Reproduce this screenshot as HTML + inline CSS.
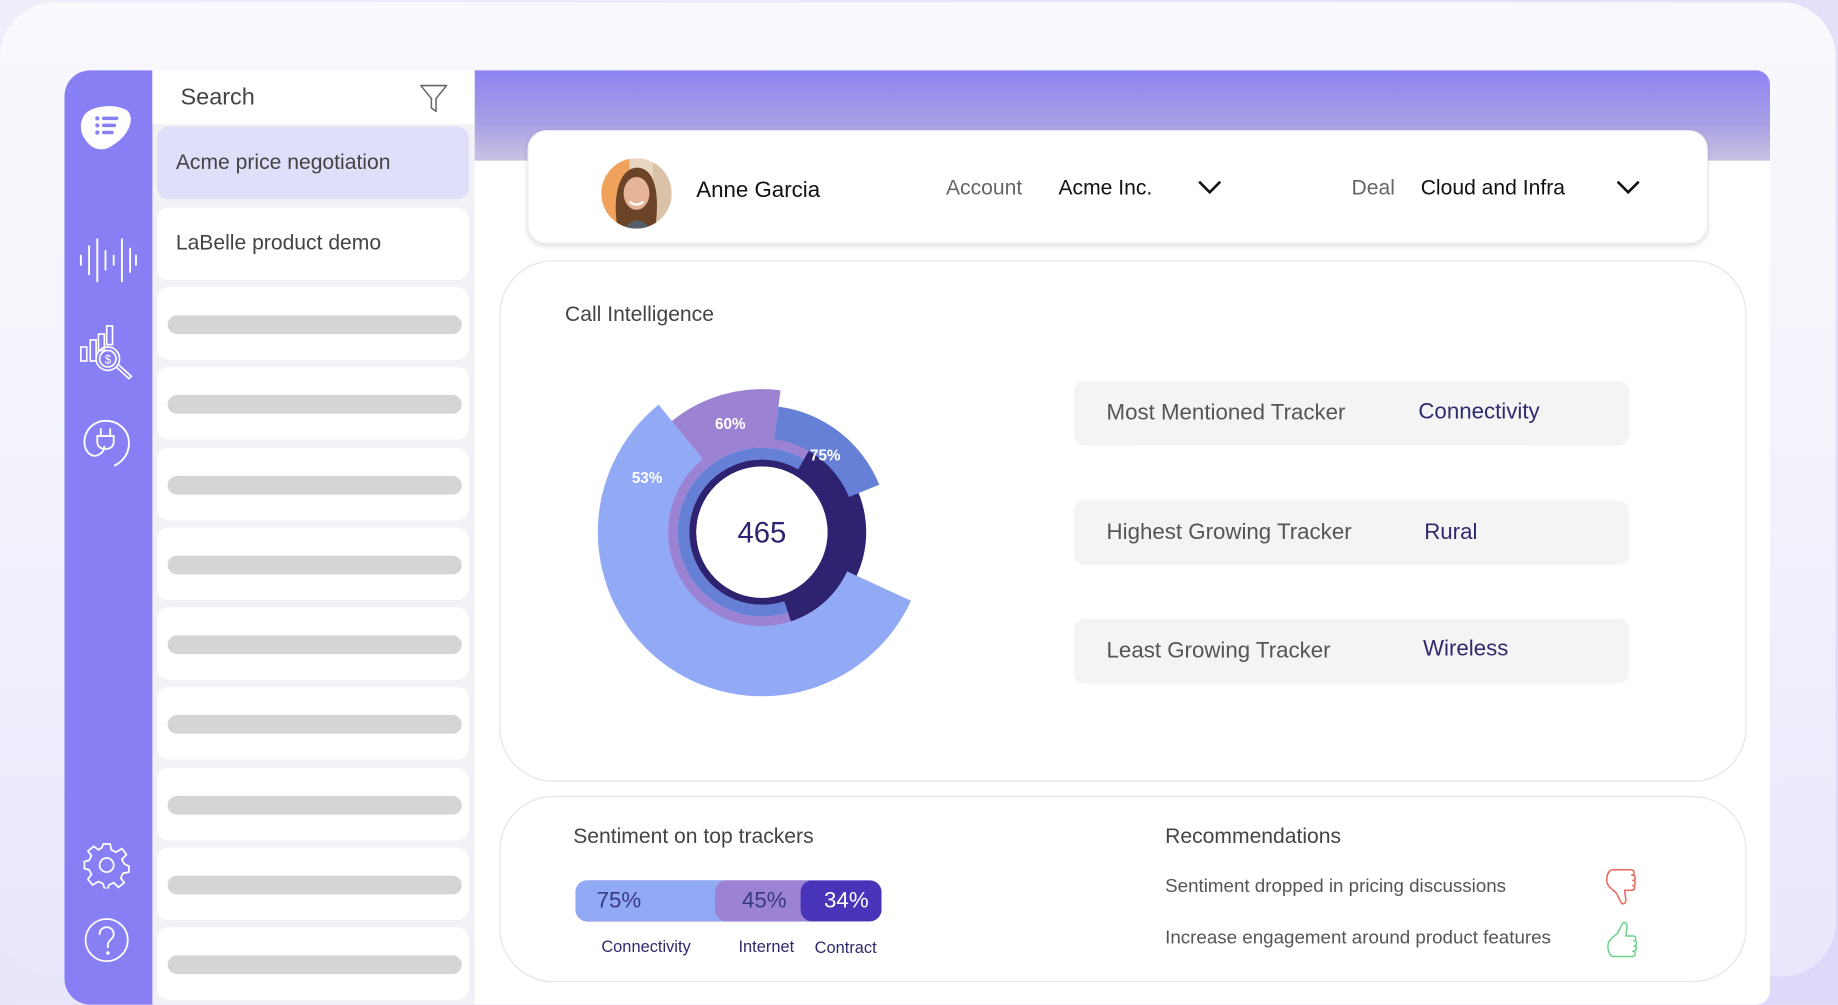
<!DOCTYPE html>
<html><head><meta charset="utf-8">
<style>
*{margin:0;padding:0;box-sizing:border-box}
html,body{width:1838px;height:1004px;overflow:hidden;background:#e6e4fb}
body{font-family:"Liberation Sans",sans-serif}
#w{position:absolute;left:0;top:0;width:1568px;height:857px;transform:scale(1.17219);transform-origin:0 0;background:linear-gradient(135deg,#eeeefb 0%,#e4e2fa 60%,#dcd9f8 100%)}
.abs{position:absolute}
#outer{left:0;top:2px;width:1566px;height:831px;border-radius:46px;background:linear-gradient(180deg,#f8f9fd 0%,#f4f4fc 40%,#e9e7fb 100%)}
#side{left:55px;top:60px;width:76px;height:797px;background:#897ff5;border-radius:22px 0 0 22px}
#list{left:130px;top:60px;width:275px;height:797px;background:#f1f1f6}
#search{left:130px;top:60px;width:275px;height:46px;background:#fff}
.item{position:absolute;left:134px;width:266px;height:62px;background:#fff;border-radius:10px}
.bar{position:absolute;left:9px;top:24px;width:251px;height:16px;border-radius:8px;background:#d5d5d5}
#main{left:405px;top:60px;width:1105px;height:797px;background:#fff;border-radius:0 12px 12px 0}
#hdr{left:405px;top:60px;width:1105px;height:77px;background:linear-gradient(180deg,#8d83f2 0%,#a9a1e6 60%,#c7c3e2 100%);border-radius:0 12px 0 0}
#top{left:450px;top:111px;width:1007px;height:97px;background:#fff;border-radius:16px;box-shadow:0 2px 4px rgba(0,0,0,.12);border:1px solid #eee}
.card{position:absolute;left:426px;width:1064px;background:#fff;border:1px solid #e4e4e4;border-radius:46px}
.t{position:absolute;white-space:nowrap}
.trk{position:absolute;left:916px;width:474px;height:55px;background:#f4f4f4;border-radius:9px}
.trk .l{position:absolute;left:28px;top:17px;font-size:19px;color:#555}
.trk .v{position:absolute;left:294px;top:16px;font-size:19px;color:#2e2a6e}
</style></head><body>
<div id="w">
<div id="outer" class="abs"></div>
<div id="side" class="abs"></div>
<div id="list" class="abs"></div>
<div id="search" class="abs"></div>
<div class="t" style="left:154px;top:72px;font-size:20px;color:#444">Search</div>
<svg class="abs" style="left:357px;top:71px" width="26" height="26" viewBox="0 0 26 26"><path d="M2 2H24L15 13V24L11 21V13Z" fill="none" stroke="#666" stroke-width="1.3" stroke-linejoin="round"/></svg>

<div class="item" style="top:108px;background:#dfdffa"><div class="t" style="left:16px;top:20px;font-size:18px;color:#444">Acme price negotiation</div></div>
<div class="item" style="top:177px"><div class="t" style="left:16px;top:20px;font-size:18px;color:#444">LaBelle product demo</div></div>
<div class="item" style="top:245px"><div class="bar"></div></div>
<div class="item" style="top:313px"><div class="bar"></div></div>
<div class="item" style="top:382px"><div class="bar"></div></div>
<div class="item" style="top:450px"><div class="bar"></div></div>
<div class="item" style="top:518px"><div class="bar"></div></div>
<div class="item" style="top:586px"><div class="bar"></div></div>
<div class="item" style="top:655px"><div class="bar"></div></div>
<div class="item" style="top:723px"><div class="bar"></div></div>
<div class="item" style="top:791px"><div class="bar"></div></div>

<!-- sidebar icons -->
<svg class="abs" style="left:66px;top:88px" width="50" height="42" viewBox="0 0 50 42"><path d="M6 10C12 2 32 0 42 6C50 12 44 28 30 36C22 42 12 40 6 30C2 24 2 16 6 10Z" fill="#fff"/><g fill="#897ff5"><circle cx="17" cy="13" r="1.8"/><circle cx="17" cy="19" r="1.8"/><circle cx="17" cy="25" r="1.8"/><rect x="21" y="11.5" width="14" height="3" rx="1.5"/><rect x="21" y="17.5" width="12" height="3" rx="1.5"/><rect x="21" y="23.5" width="10" height="3" rx="1.5"/></g></svg>
<svg class="abs" style="left:66px;top:200px" width="52" height="44" viewBox="0 0 52 44"><g stroke="#fff" stroke-width="1.6" stroke-linecap="round"><line x1="3" y1="18" x2="3" y2="26"/><line x1="10" y1="10" x2="10" y2="34"/><line x1="17" y1="4" x2="17" y2="40"/><line x1="24" y1="14" x2="24" y2="30"/><line x1="31" y1="18" x2="31" y2="26"/><line x1="38" y1="4" x2="38" y2="40"/><line x1="45" y1="12" x2="45" y2="32"/><line x1="50" y1="18" x2="50" y2="26"/></g></svg>
<svg class="abs" style="left:66px;top:276px" width="52" height="52" viewBox="0 0 52 52"><g fill="none" stroke="#fff" stroke-width="1.4"><rect x="3" y="20" width="5" height="12"/><rect x="11" y="14" width="5" height="18"/><rect x="18" y="9" width="5" height="14"/><rect x="25" y="2" width="5" height="16"/><circle cx="26" cy="30" r="10"/><circle cx="26" cy="30" r="7"/><path d="M33 37L44 47L46 45L35 35"/></g><text x="26" y="34" font-size="10" fill="#fff" text-anchor="middle" font-family="Liberation Sans">$</text></svg>
<svg class="abs" style="left:68px;top:355px" width="46" height="46" viewBox="0 0 46 46"><path d="M30 42C38 38 42 31 42 23C42 12 33 4 22 4C12 4 4 12 4 22C4 31 11 36 16 33C20 31 21 28 21 26" fill="none" stroke="#fff" stroke-width="1.6" stroke-linecap="round"/><path d="M15 17H29V22C29 26 26 28 22 28C18 28 15 26 15 22Z M18 17V11 M26 17V11" fill="none" stroke="#fff" stroke-width="1.6" stroke-linecap="round"/></svg>
<svg class="abs" style="left:71px;top:718px" width="40" height="40" viewBox="0 0 40 40"><path d="M17 2H23L24 7L28 9L33 6L37 11L33 15L35 19L39 21V26L34 27L32 31L35 35L30 39L26 35L22 37L21 40H18L17 36L13 34L8 37L4 32L7 28L5 24L1 23V17L5 16L7 12L4 8L9 4L13 7L16 5Z" fill="none" stroke="#fff" stroke-width="1.5" stroke-linejoin="round"/><circle cx="20" cy="20" r="6" fill="none" stroke="#fff" stroke-width="1.5"/></svg>
<svg class="abs" style="left:71px;top:782px" width="40" height="40" viewBox="0 0 40 40"><circle cx="20" cy="20" r="18" fill="none" stroke="#fff" stroke-width="1.5"/><path d="M14 15C14 11 17 9 20 9C24 9 26 12 26 15C26 19 21 20 21 24V26" fill="none" stroke="#fff" stroke-width="1.6" stroke-linecap="round"/><circle cx="21" cy="31" r="1.5" fill="#fff"/></svg>

<div id="main" class="abs"></div>
<div id="hdr" class="abs"></div>
<div id="top" class="abs"></div>
<svg class="abs" style="left:513px;top:135px" width="60" height="60" viewBox="0 0 60 60"><defs><clipPath id="c"><circle cx="30" cy="30" r="30"/></clipPath></defs><g clip-path="url(#c)"><rect width="60" height="60" fill="#e8d6c0"/><rect width="24" height="60" fill="#f0a15a"/><rect x="44" y="0" width="16" height="60" fill="#d9c2a8"/><path d="M14 60C10 40 12 10 30 8C46 8 50 30 46 60Z" fill="#6b4428"/><ellipse cx="30" cy="30" rx="11" ry="14" fill="#e7b497"/><path d="M24 37Q30 42 36 37" stroke="#fff" stroke-width="2" fill="none"/><path d="M20 60Q30 46 42 60Z" fill="#55606a"/></g></svg>
<div class="t" style="left:594px;top:152px;font-size:19px;color:#111">Anne Garcia</div>
<div class="t" style="left:807px;top:150px;font-size:18px;color:#666">Account</div>
<div class="t" style="left:903px;top:150px;font-size:18px;color:#111">Acme Inc.</div>
<svg class="abs" style="left:1021px;top:153px" width="22" height="14" viewBox="0 0 22 14"><path d="M2 2L11 11L20 2" fill="none" stroke="#111" stroke-width="2.2"/></svg>
<div class="t" style="left:1153px;top:150px;font-size:18px;color:#666">Deal</div>
<div class="t" style="left:1212px;top:150px;font-size:18px;color:#111">Cloud and Infra</div>
<svg class="abs" style="left:1378px;top:153px" width="22" height="14" viewBox="0 0 22 14"><path d="M2 2L11 11L20 2" fill="none" stroke="#111" stroke-width="2.2"/></svg>

<div class="card" style="top:222px;height:445px"></div>
<div class="t" style="left:482px;top:258px;font-size:18px;color:#444">Call Intelligence</div>

<svg class="abs" style="left:0;top:0" width="1568" height="857" viewBox="0 0 1568 857">
<circle cx="650" cy="454" r="77" fill="none" stroke="#9b82d2" stroke-width="10"/>
<circle cx="650" cy="454" r="67" fill="none" stroke="#6580d6" stroke-width="10"/>
<circle cx="650" cy="454" r="59" fill="none" stroke="#2e2370" stroke-width="6"/>
<path d="M694.5 376.9A89 89 0 0 1 677.5 538.6L667.3 507.3A56 56 0 0 0 678 405.5Z" fill="#2e2370"/>
<path d="M777.2 512.5A140 140 0 1 1 561.9 345.2L599.7 391.8A80 80 0 1 0 722.7 487.4Z" fill="#92a9f6"/>
<path d="M573.2 359.2A122 122 0 0 1 665.9 333L660.4 374.7A80 80 0 0 0 599.7 391.8Z" fill="#9b82d2"/>
<path d="M664.1 346.9A108 108 0 0 1 750.1 413.5L724.2 424A80 80 0 0 0 660.4 374.7Z" fill="#6580d6"/>
<circle cx="650" cy="454" r="56" fill="#fff"/>
<text x="650" y="463" font-size="25" fill="#2e2370" text-anchor="middle" font-family="Liberation Sans">465</text>
<g font-size="13" font-weight="bold" fill="#fff" font-family="Liberation Sans" text-anchor="middle"><text x="623" y="366">60%</text><text x="704" y="393">75%</text><text x="552" y="412">53%</text></g>
</svg>

<div class="trk" style="top:325px"><div class="l">Most Mentioned Tracker</div><div class="v">Connectivity</div></div>
<div class="trk" style="top:427px"><div class="l">Highest Growing Tracker</div><div class="v" style="left:299px;top:17px">Rural</div></div>
<div class="trk" style="top:528px"><div class="l">Least Growing Tracker</div><div class="v" style="left:298px;top:15px">Wireless</div></div>

<div class="card" style="top:679px;height:159px"></div>
<div class="t" style="left:489px;top:703px;font-size:18px;color:#444">Sentiment on top trackers</div>
<div class="abs" style="left:491px;top:751px;width:261px;height:35px;border-radius:10px;overflow:hidden;background:#4834b8">
<div class="abs" style="left:0;top:0;width:130px;height:35px;background:#92a9f6"></div>
<div class="abs" style="left:119px;top:0;width:80px;height:35px;background:#9b82d2;border-radius:10px 0 0 10px"></div>
<div class="abs" style="left:192px;top:0;width:69px;height:35px;background:#4834b8;border-radius:10px"></div>
<div class="t" style="left:18px;top:7px;font-size:19px;color:#3a3a80">75%</div>
<div class="t" style="left:142px;top:7px;font-size:19px;color:#3a3a80">45%</div>
<div class="t" style="left:212px;top:7px;font-size:19px;color:#fff">34%</div>
</div>
<div class="t" style="left:513px;top:799px;font-size:14px;color:#2e2a6e">Connectivity</div>
<div class="t" style="left:630px;top:799px;font-size:14px;color:#2e2a6e">Internet</div>
<div class="t" style="left:695px;top:800px;font-size:14px;color:#2e2a6e">Contract</div>

<div class="t" style="left:994px;top:703px;font-size:18px;color:#444">Recommendations</div>
<div class="t" style="left:994px;top:748px;font-size:16px;color:#555">Sentiment dropped in pricing discussions</div>
<div class="t" style="left:994px;top:792px;font-size:16px;color:#555">Increase engagement around product features</div>
<svg class="abs" style="left:1369px;top:740px" width="28" height="34" viewBox="0 0 28 34"><path d="M6 2H22C24 2 25 3 25 4.5C25 6 24 6.5 23 6.5C25 6.5 26 7.5 26 9C26 10.5 25 11 24 11C26 11 26 12 26 13.5C26 15 25 15.5 24 15.5C25 15.5 25.5 16.5 25.5 17.5C25.5 19 24.5 19.5 23 19.5H17L18 28C18 31 15 32 14 30L10 22C7 19 3 17 2 13C1 8 3 3 6 2Z" fill="none" stroke="#e8685a" stroke-width="1.3" stroke-linejoin="round"/></svg>
<svg class="abs" style="left:1370px;top:784px" width="28" height="34" viewBox="0 0 28 34"><path d="M6 32H22C24 32 25 31 25 29.5C25 28 24 27.5 23 27.5C25 27.5 26 26.5 26 25C26 23.5 25 23 24 23C26 23 26 22 26 20.5C26 19 25 18.5 24 18.5C25 18.5 25.5 17.5 25.5 16.5C25.5 15 24.5 14.5 23 14.5H17L18 6C18 3 15 2 14 4L10 12C7 15 3 17 2 21C1 26 3 31 6 32Z" fill="none" stroke="#6fd08a" stroke-width="1.3" stroke-linejoin="round"/></svg>
</div>
</body></html>
